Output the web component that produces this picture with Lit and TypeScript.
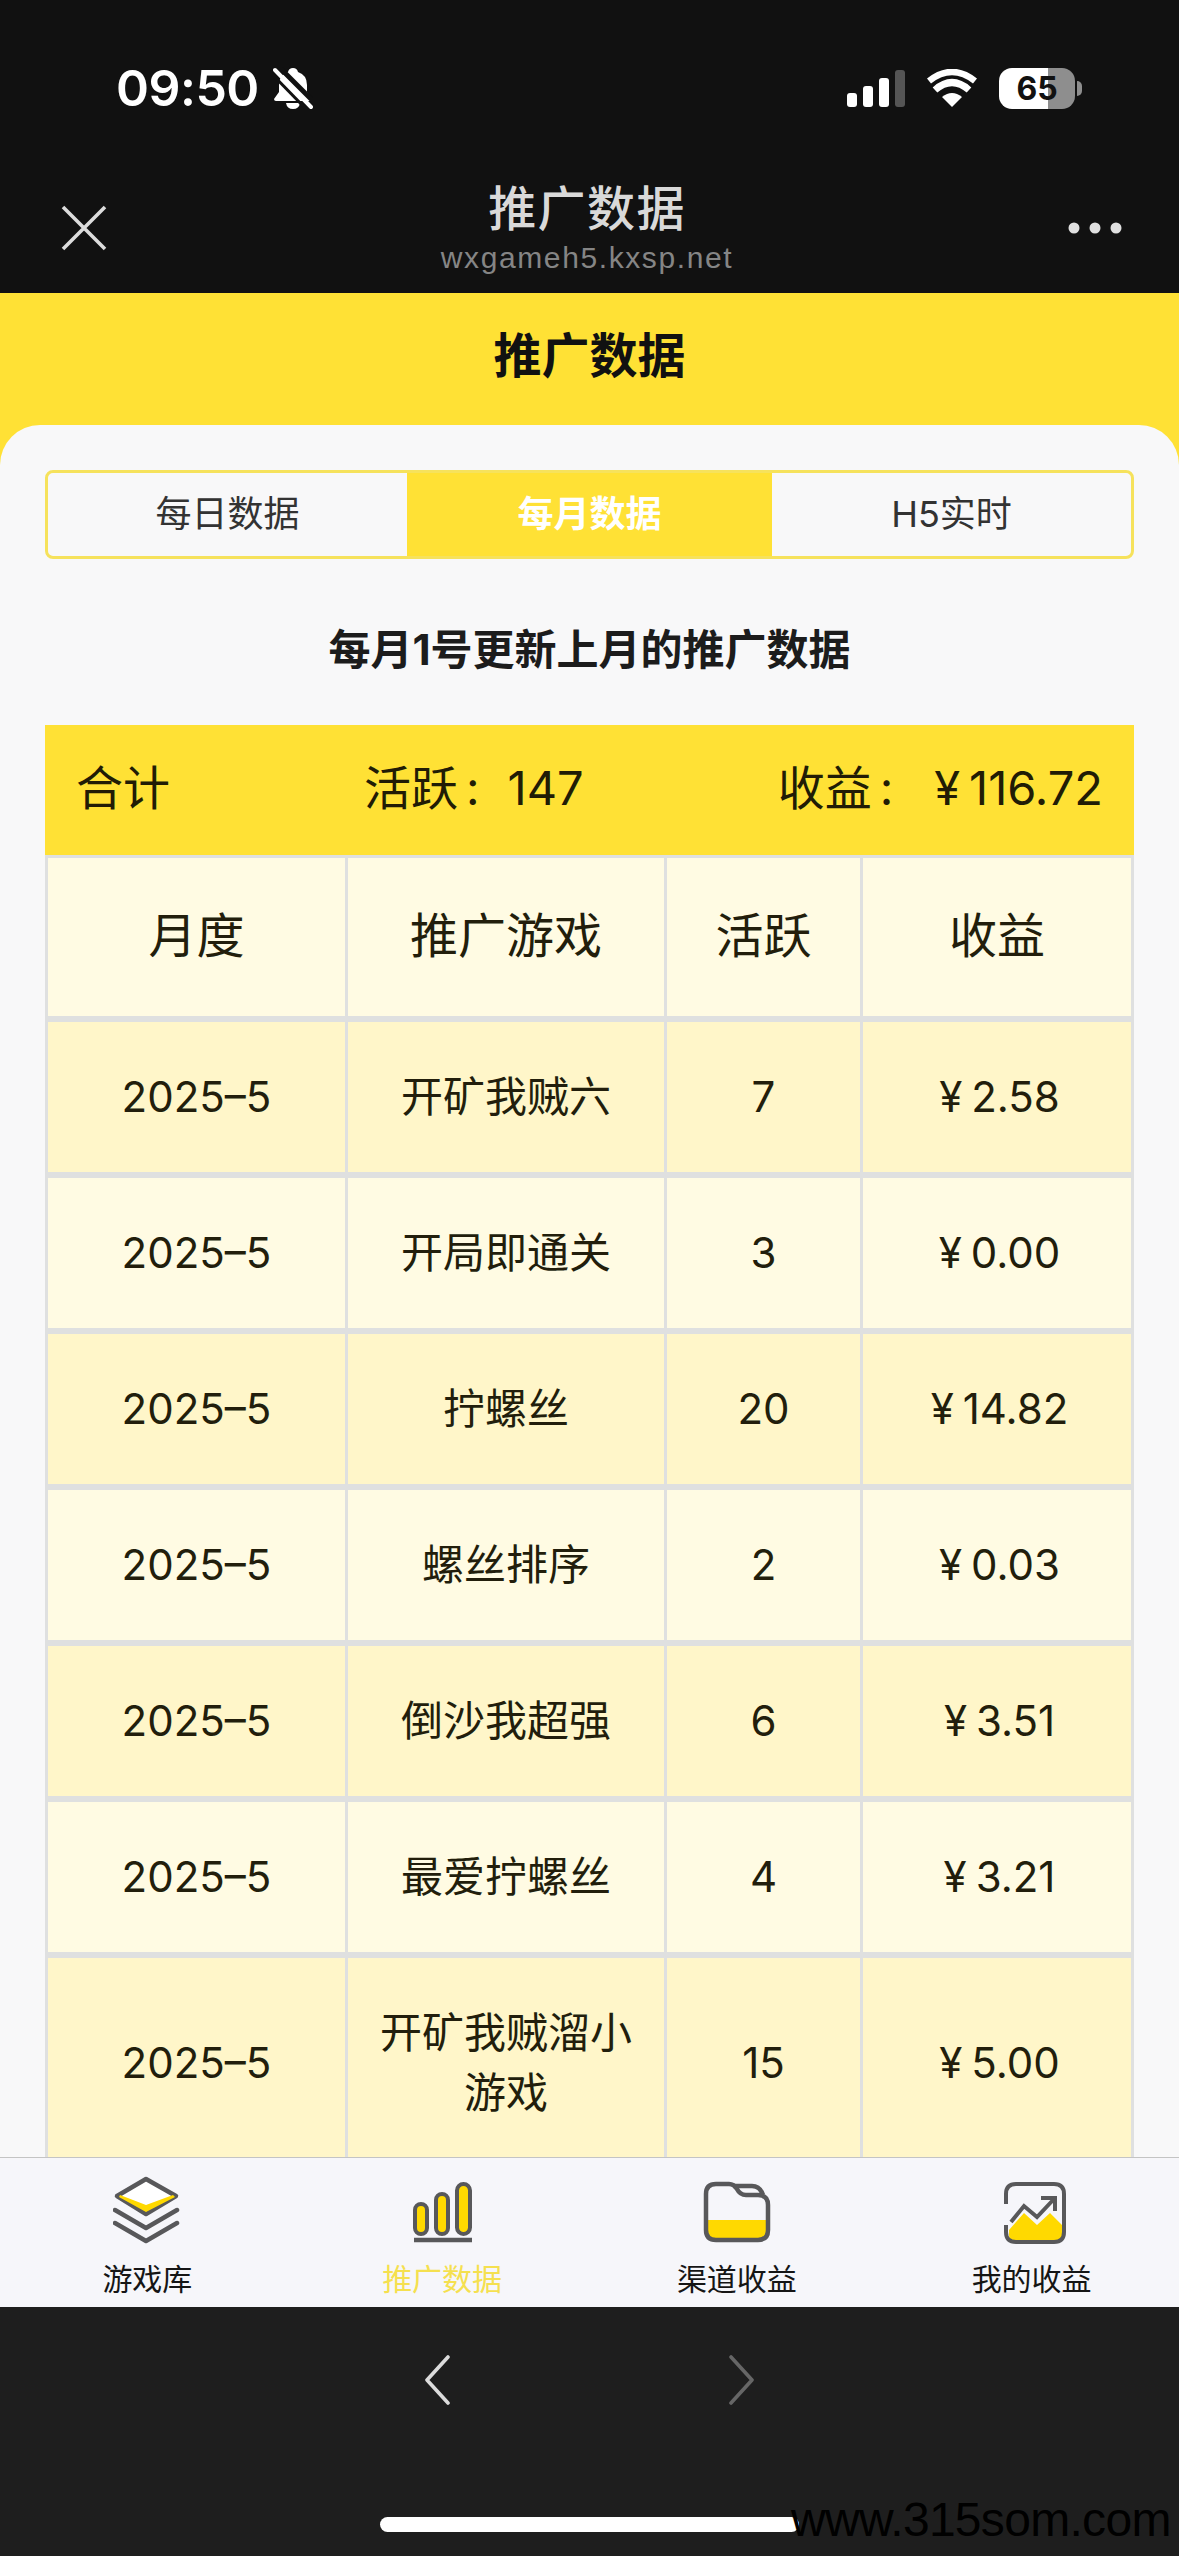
import { LitElement, html, css, svg } from "lit";
import { customElement } from "lit/decorators.js";

const rows = [
  ["2025-5", "开矿我贼六", "7", "2.58"],
  ["2025-5", "开局即通关", "3", "0.00"],
  ["2025-5", "拧螺丝", "20", "14.82"],
  ["2025-5", "螺丝排序", "2", "0.03"],
  ["2025-5", "倒沙我超强", "6", "3.51"],
  ["2025-5", "最爱拧螺丝", "4", "3.21"],
  ["2025-5", "开矿我贼溜小游戏", "15", "5.00"],
];

const stroke = "#58585a";
const fill = "#ffd900";

const icons = {
  stack: svg`
    <path d="M33 3L63 20L33 38L4 20Z" fill="#fff" stroke=${stroke} stroke-width="4.5" stroke-linejoin="round"/>
    <path d="M7 19L33 29L60 19L62 21L33 36L6 21Z" fill=${fill}/>
    <path d="M2 34L33 52L64 34M2 47L33 65L64 47" fill="none" stroke=${stroke} stroke-width="4.5" stroke-linecap="round" stroke-linejoin="round"/>`,
  bars: svg`<g transform="translate(5 4)" fill=${fill} stroke=${stroke} stroke-width="4">
    <rect x="2" y="24" width="12" height="30" rx="6"/>
    <rect x="23" y="14" width="12" height="40" rx="6"/>
    <rect x="44" y="4" width="13" height="50" rx="6.5"/>
    <path d="M1 60H59" fill="none" stroke-width="4.5"/></g>`,
  folder: svg`<g transform="translate(1 6)">
    <path d="M4 38H62V50Q62 56 56 56H10Q4 56 4 50Z" fill=${fill}/>
    <path d="M2 48V12Q2 2 12 2H25Q30 2 33 7Q36 13 42 13H54Q64 13 64 23V48Q64 58 54 58H12Q2 58 2 48Z" fill="none" stroke=${stroke} stroke-width="4.5"/>
    <path d="M29 4H48Q56 4 59 13" fill="none" stroke=${stroke} stroke-width="4.5"/></g>`,
  chart: svg`<g transform="translate(6 6)">
    <path d="M5 48L20 31L33 43L46 31L59 44V53Q59 58 54 58H10Q5 58 5 53Z" fill=${fill}/>
    <path d="M2 22V12Q2 2 12 2H50Q60 2 60 12V50Q60 60 50 60H12Q2 60 2 50V43" fill="none" stroke=${stroke} stroke-width="4"/>
    <path d="M7 40L20 24L33 35L50 17M37 16H51V29" fill="none" stroke=${stroke} stroke-width="4"/></g>`,
};

const navItems = [
  { label: "游戏库", icon: icons.stack, active: false },
  { label: "推广数据", icon: icons.bars, active: true },
  { label: "渠道收益", icon: icons.folder, active: false },
  { label: "我的收益", icon: icons.chart, active: false },
];

@customElement("app-root")
export class AppRoot extends LitElement {
  static styles = css`
    :host {
      display: block;
      width: 1179px;
      height: 2556px;
      overflow: hidden;
      font-family: Inter, "Noto Sans CJK SC", sans-serif;
      color: #222;
    }
    .app { position: relative; display: flex; flex-direction: column; height: 2556px; }
    .header { height: 293px; background: #111; box-sizing: border-box; padding-top: 60px; }
    .status { display: flex; align-items: center; height: 56px; padding: 0 104px 0 116px; color: #fff; }
    .time { font-size: 50px; font-weight: 600; line-height: 56px; margin-right: 14px; letter-spacing: -0.5px; }
    .status-right { display: flex; align-items: center; gap: 22px; margin-left: auto; }
    .battery {
      position: relative;
      width: 76px;
      height: 41px;
      border-radius: 13px;
      background: linear-gradient(90deg, #fff 64.5%, #8e8e8e 64.5%);
      color: #111;
      font-size: 32px;
      font-weight: 700;
      line-height: 41px;
      text-align: center;
    }
    .battery::after {
      content: "";
      position: absolute;
      left: 78px;
      top: 13px;
      width: 5px;
      height: 15px;
      border-radius: 0 6px 6px 0;
      background: #8e8e8e;
    }
    .titlebar {
      display: flex;
      align-items: center;
      justify-content: space-between;
      height: 100px;
      margin-top: 62px;
      padding: 0 57px 0 60px;
    }
    .titlebar svg { flex: none; }
    .title-text { text-align: center; margin-left: -2px; }
    .title-main { font-size: 48px; line-height: 60px; font-weight: 500; color: #d9d9d9; letter-spacing: 1.4px; }
    .title-url { font-family: "Liberation Sans", sans-serif; font-size: 30px; line-height: 38px; color: #858585; letter-spacing: 1.6px; }

    .main { flex: none; height: 1864px; overflow: hidden; background: #ffe135; }
    .page-title { height: 132px; box-sizing: border-box; padding-bottom: 7px; display: flex; align-items: center; justify-content: center; font-size: 48px; line-height: 60px; font-weight: 700; color: #111; }
    .card { background: #f8f8f9; border-radius: 40px 40px 0 0; padding: 45px 45px 0; height: 1732px; box-sizing: border-box; }
    .tabs { display: flex; height: 89px; box-sizing: border-box; border: 3px solid #f6e25c; border-radius: 8px; overflow: hidden; }
    .tab { flex: 1; display: flex; align-items: center; justify-content: center; font-size: 36px; line-height: 50px; padding-bottom: 2px; box-sizing: border-box; color: #333; }
    .tab.active { flex: none; width: 365px; background: #ffe135; color: #fff; font-weight: 700; margin: -3px 0; }
    .notice { margin: 56px 0 40px; font-size: 42px; line-height: 70px; font-weight: 700; text-align: center; color: #1c1c1c; }
    .summary {
      display: flex;
      align-items: center;
      justify-content: space-between;
      height: 130px;
      box-sizing: border-box;
      padding: 0 31px 5px;
      background: #ffe135;
      font-size: 47px;
      line-height: 60px;
      color: #211c05;
    }
    .colon { margin: 0 28px 0 8px; }
    .colon.wide { margin-right: 41px; }
    .yen { margin-right: 9px; }
    .table {
      display: grid;
      grid-template-columns: 297px 316px 193px 268px;
      column-gap: 3px;
      row-gap: 6px;
      padding: 3px 3px 0;
      background: #dfe0e0;
    }
    .row { display: contents; }
    .cell {
      display: flex;
      align-items: center;
      justify-content: center;
      box-sizing: border-box;
      padding: 45px 20px;
      text-align: center;
      font-size: 42px;
      line-height: 60px;
      background: #fffbe3;
      color: #221e0c;
    }
    .cell.money { padding-left: 25px; }
    .head .cell { height: 158px; padding-bottom: 47px; font-size: 48px; }
    .odd .cell { background: #fff6c9; }

    .nav {
      flex: none;
      display: flex;
      height: 150px;
      box-sizing: border-box;
      border-top: 1px solid #c4c4c4;
      background: #f6f6fa;
    }
    .nav-item {
      flex: 1;
      display: flex;
      flex-direction: column;
      align-items: center;
      padding-top: 18px;
      font-size: 30px;
      line-height: 36px;
      color: #151515;
    }
    .nav-item svg { display: block; margin-bottom: 17px; }
    .nav-item.active { color: #f5e04f; }

    .bottom { flex: 1; background: #1e1e1e; display: flex; flex-direction: column; align-items: center; }
    .arrows { display: flex; gap: 279px; margin-top: 48px; }
    .arrows svg { display: block; }
    .home { width: 419px; height: 15px; border-radius: 8px; background: #fff; margin-top: 112px; }
    .watermark {
      position: absolute;
      left: 791px;
      top: 2492px;
      font-family: "Liberation Sans", sans-serif;
      font-size: 48px;
      line-height: 56px;
      letter-spacing: -0.7px;
      color: #000;
      white-space: nowrap;
    }
  `;

  private statusIcons() {
    return html`
      <svg width="58" height="37" viewBox="0 0 58 37">
        <rect x="0" y="23" width="10" height="14" rx="3" fill="#fff"/>
        <rect x="16" y="16" width="10" height="21" rx="3" fill="#fff"/>
        <rect x="32" y="8" width="10" height="29" rx="3" fill="#fff"/>
        <rect x="48" y="0" width="10" height="37" rx="3" fill="#555"/>
      </svg>
      <svg width="50" height="38" viewBox="0 0 50 38">
        <path d="M25 38L15 28Q25 20 35 28Z" fill="#fff"/>
        <path d="M8 21Q25 6 42 21" fill="none" stroke="#fff" stroke-width="7"/>
        <path d="M2 12Q25 -6 48 12" fill="none" stroke="#fff" stroke-width="6.5"/>
      </svg>
      <div class="battery">65</div>
    `;
  }

  render() {
    return html`
      <div class="app">
        <header class="header">
          <div class="status">
            <span class="time">09:50</span>
            <svg width="40" height="43" viewBox="0 0 40 43">
              <path d="M20 1Q24 1 25 5Q34 8 34 18V25L39 32Q39 34 37 34H3Q1 34 1 32L6 25V18Q6 8 15 5Q16 1 20 1Z" fill="#fff"/>
              <path d="M13 36H27Q26 42 20 42Q14 42 13 36Z" fill="#fff"/>
              <path d="M6 0L43 37" stroke="#111" stroke-width="5"/>
              <path d="M2 3L38 40" stroke="#fff" stroke-width="4" stroke-linecap="round"/>
              <path d="M-2 6L34 43" stroke="#111" stroke-width="3"/>
            </svg>
            <div class="status-right">${this.statusIcons()}</div>
          </div>
          <div class="titlebar">
            <svg width="48" height="48" viewBox="0 0 48 48">
              <path d="M3 3L45 45M45 3L3 45" stroke="#dcdcdc" stroke-width="3.6" fill="none"/>
            </svg>
            <div class="title-text">
              <div class="title-main">推广数据</div>
              <div class="title-url">wxgameh5.kxsp.net</div>
            </div>
            <svg width="54" height="12" viewBox="0 0 54 12">
              <circle cx="6" cy="6" r="5.5" fill="#e0e0e0"/>
              <circle cx="27" cy="6" r="5.5" fill="#e0e0e0"/>
              <circle cx="48" cy="6" r="5.5" fill="#e0e0e0"/>
            </svg>
          </div>
        </header>

        <main class="main">
          <div class="page-title">推广数据</div>
          <section class="card">
            <div class="tabs">
              <div class="tab">每日数据</div>
              <div class="tab active">每月数据</div>
              <div class="tab">H5实时</div>
            </div>
            <div class="notice">每月1号更新上月的推广数据</div>
            <div class="summary">
              <span>合计</span>
              <span>活跃<span class="colon">:</span>147</span>
              <span>收益<span class="colon wide">:</span><span class="yen">¥</span>116.72</span>
            </div>
            <div class="table">
              <div class="row head">
                <div class="cell">月度</div>
                <div class="cell">推广游戏</div>
                <div class="cell">活跃</div>
                <div class="cell">收益</div>
              </div>
              ${rows.map(
                (r, i) => html`
                  <div class="row ${i % 2 === 0 ? "odd" : ""}">
                    <div class="cell">${r[0].replace("-", "–")}</div>
                    <div class="cell">${r[1]}</div>
                    <div class="cell">${r[2]}</div>
                    <div class="cell money"><span class="yen">¥</span>${r[3]}</div>
                  </div>
                `
              )}
            </div>
          </section>
        </main>

        <nav class="nav">
          ${navItems.map(
            (n) => html`
              <div class="nav-item ${n.active ? "active" : ""}">
                <svg width="68" height="68" viewBox="0 0 68 68">${n.icon}</svg>
                <span>${n.label}</span>
              </div>
            `
          )}
        </nav>

        <footer class="bottom">
          <div class="arrows">
            <svg width="26" height="50" viewBox="0 0 26 50">
              <path d="M24 2L3 25L24 48" fill="none" stroke="#dcdcdc" stroke-width="3.6" stroke-linecap="round" stroke-linejoin="round"/>
            </svg>
            <svg width="26" height="50" viewBox="0 0 26 50">
              <path d="M2 2L23 25L2 48" fill="none" stroke="#666" stroke-width="3.6" stroke-linecap="round" stroke-linejoin="round"/>
            </svg>
          </div>
          <div class="home"></div>
        </footer>
        <div class="watermark">www.315som.com</div>
      </div>
    `;
  }
}
